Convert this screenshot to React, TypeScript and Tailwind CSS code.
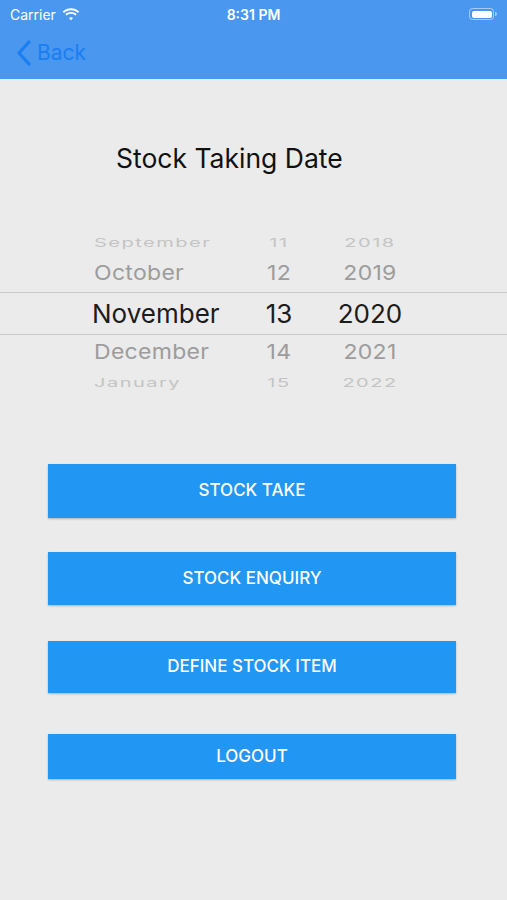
import React from "react";

const font = { fontFamily: 'Inter, "Liberation Sans", Arial, sans-serif' };

type Row = {
  month: string;
  day: string;
  year: string;
  h: string;
  text: string;
  color: string;
  squash?: string;
};

const rowsAbove: Row[] = [
  { month: "September", day: "11", year: "2018", h: "h-[24px]", text: "text-[20px] tracking-[1.5px]", color: "text-[#c4c4c4]", squash: "scale-y-[0.6]" },
  { month: "October", day: "12", year: "2019", h: "h-[37px]", text: "text-[23px] tracking-[0.3px]", color: "text-[#9c9c9c]", squash: "scale-y-[0.9]" },
];

const rowsBelow: Row[] = [
  { month: "December", day: "14", year: "2021", h: "h-[35px]", text: "text-[23px] tracking-[0.3px]", color: "text-[#9c9c9c]", squash: "scale-y-[0.9]" },
  { month: "January", day: "15", year: "2022", h: "h-[26px]", text: "text-[20px] tracking-[1.5px]", color: "text-[#c4c4c4]", squash: "scale-y-[0.6]" },
];

function PickerRow({ r }: { r: Row }) {
  return (
    <div className={`flex items-center ${r.h} ${r.text} ${r.color}`}>
      <div className="w-[94px] shrink-0" />
      <div className={`w-[149px] ${r.squash ?? ""}`}>{r.month}</div>
      <div className={`w-[72px] text-center ${r.squash ?? ""}`}>{r.day}</div>
      <div className={`w-[110px] text-center ${r.squash ?? ""}`}>{r.year}</div>
    </div>
  );
}

function StatusBar() {
  return (
    <div className="flex h-[28px] items-center justify-between px-[10px] text-[14px] text-white">
      <div className="flex w-[120px] items-center gap-[6px]">
        <span>Carrier</span>
        <svg width="18" height="13" viewBox="0 0 18 13" fill="white">
          <path d="M9 2.2c2.7 0 5.1 1 7 2.7l1.3-1.4C15 1.4 12.1.2 9 .2S3 1.4.7 3.5L2 4.9C3.9 3.2 6.3 2.2 9 2.2z" />
          <path d="M9 5.8c1.7 0 3.2.6 4.4 1.7l1.3-1.4C13.2 4.7 11.2 3.9 9 3.9S4.8 4.7 3.3 6.1l1.3 1.4C5.8 6.4 7.3 5.8 9 5.8z" />
          <path d="M9 9.3c.8 0 1.5.3 2 .8l-2 2.2-2-2.2c.5-.5 1.2-.8 2-.8z" />
        </svg>
      </div>
      <span className="font-semibold">8:31 PM</span>
      <div className="flex w-[120px] justify-end">
        <div className="flex items-center">
          <div className="flex h-[12px] w-[25px] items-center rounded-[3.5px] border border-white/50 p-[1.5px]">
            <div className="h-full w-full rounded-[2px] bg-white" />
          </div>
          <div className="ml-[1px] h-[4px] w-[1.5px] rounded-r bg-white/50" />
        </div>
      </div>
    </div>
  );
}

export default function App() {
  const buttons = [
    { label: "STOCK TAKE", h: "h-[54px]", mb: "mb-[34px]" },
    { label: "STOCK ENQUIRY", h: "h-[53px]", mb: "mb-[36px]" },
    { label: "DEFINE STOCK ITEM", h: "h-[52px]", mb: "mb-[41px]" },
    { label: "LOGOUT", h: "h-[45px]", mb: "" },
  ];

  return (
    <div className="min-h-[900px] w-[507px] bg-[#ebebeb]" style={font}>
      {/* Header */}
      <div className="h-[79px] bg-[#4a97f0]">
        <StatusBar />
        <div className="flex h-[51px] items-center pl-[16px] pb-[2px] text-[#1a7ef0]">
          <svg width="17" height="26" viewBox="0 0 17 26" fill="none" stroke="currentColor" strokeWidth="3.2" strokeLinecap="round" strokeLinejoin="round">
            <path d="M13 2 L3 13 L13 24" />
          </svg>
          <span className="ml-[4px] text-[21px]">Back</span>
        </div>
      </div>

      {/* Title */}
      <div className="pl-[116px] pt-[61px] text-[26.5px] leading-[36px] text-[#111]">Stock Taking Date</div>

      {/* Date picker */}
      <div className="mt-[55px]">
        {rowsAbove.map((r) => (
          <PickerRow key={r.month} r={r} />
        ))}
        <div className="flex h-[43px] items-center border-y border-[#c9c9c9] text-[26px] text-[#1c1c1c]">
          <div className="w-[92px] shrink-0" />
          <div className="w-[151px]">November</div>
          <div className="w-[72px] text-center">13</div>
          <div className="w-[110px] text-center">2020</div>
        </div>
        {rowsBelow.map((r) => (
          <PickerRow key={r.month} r={r} />
        ))}
      </div>

      {/* Actions */}
      <div className="ml-[48px] mt-[68px] flex w-[408px] flex-col">
        {buttons.map((b) => (
          <button
            key={b.label}
            className={`${b.h} ${b.mb} flex items-center justify-center bg-[#2196f3] text-[17px] font-medium text-white shadow-[0_1px_2px_rgba(0,0,0,0.25)]`}
          >
            {b.label}
          </button>
        ))}
      </div>
    </div>
  );
}
